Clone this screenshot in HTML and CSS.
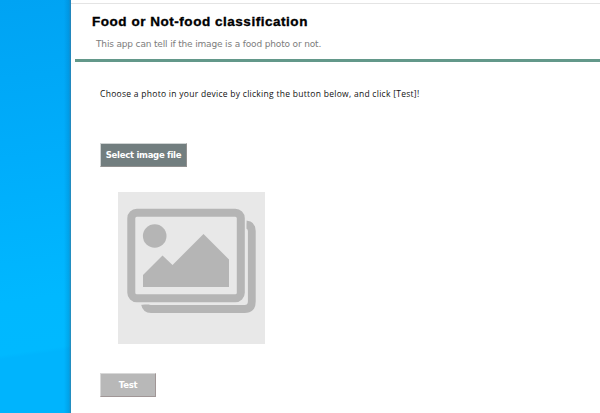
FILE: index.html
```html
<!DOCTYPE html>
<html lang="en">
<head>
<meta charset="utf-8">
<title>Food or Not-food classification</title>
<link rel="stylesheet" href="styles.css">
</head>
<body>
<div class="desktop"></div>
<main class="window">
  <header class="header">
    <h1 class="title">Food or Not-food classification</h1>
    <p class="subtitle">This app can tell if the image is a food photo or not.</p>
  </header>
  <section class="content">
    <p class="hint">Choose a photo in your device by clicking the button below, and click [Test]!</p>
    <button class="button select">Select image file</button>
    <svg class="preview" viewBox="0 0 147 152" role="img" aria-label="No image">
      <rect width="147" height="152" fill="#e8e8e8"/>
      <path d="M128 32.5Q133.800 33 133.800 39V109.500Q133.800 117 126.500 117H33Q28 117 27 112" fill="none" stroke="#b5b5b5" stroke-width="7.800"/>
      <rect x="7.500" y="14.500" width="121" height="98" rx="11" fill="#e8e8e8"/>
      <rect x="13.300" y="20.800" width="109.500" height="85.500" rx="5.500" fill="none" stroke="#b5b5b5" stroke-width="8"/>
      <circle cx="36.700" cy="44" r="11.800" fill="#b5b5b5"/>
      <path d="M25 83 44.500 63.500 54.500 73 85.500 42 111 67.500V95H25Z" fill="#b5b5b5"/>
    </svg>
    <button class="button test">Test</button>
  </section>
</main>
</body>
</html>
```

FILE: styles.css
```css
* { box-sizing: border-box; }
body {
  display: flex;
  height: 413px;
  margin: 0;
  overflow: hidden;
  background: #fff;
}
.desktop {
  width: 71px;
  background:
    linear-gradient(90deg, transparent 64px, rgba(0, 90, 150, .2) 69px, rgba(70, 110, 140, .65) 71px),
    linear-gradient(172deg, #00a3f3 0, #00adfb 38%, #00b8ff 72%, #00b9ff 84%, #00b4fd 85%, #00b4fd 100%);
}
.window {
  flex: 1;
  margin-top: 3px;
  padding-left: 4px;
  border-top: 1px solid #e4e4e4;
}
.header {
  height: 58px;
  padding: 10px 0 0 17px;
  border-bottom: 3px solid #63988a;
}
.title, .subtitle, .hint { margin: 0; white-space: nowrap; }
.title {
  font: bold 13.5px/16px "Liberation Sans", sans-serif;
  letter-spacing: .53px;
  color: #000;
  -webkit-text-stroke: .35px #000;
}
.subtitle {
  margin: 6px 0 0 4px;
  font: 9px/16px "DejaVu Sans", sans-serif;
  letter-spacing: -.16px;
  color: #7c7c7c;
}
.content {
  display: flex;
  flex-direction: column;
  align-items: flex-start;
  padding: 25px 0 0 25px;
}
.hint {
  font: 8.5px/14px "Open Sans", sans-serif;
  letter-spacing: .28px;
  color: #111;
}
.button {
  height: 24px;
  padding: 0;
  border: 1px solid;
  font: bold 8.5px/20px "DejaVu Sans", sans-serif;
  letter-spacing: -.28px;
  color: #fff;
}
.select {
  width: 87px;
  margin-top: 42px;
  border-color: #d0d4d4 #91908f #91908f #d0d4d4;
  background: #727e7f;
}
.preview {
  width: 147px;
  height: 152px;
  margin: 25px 0 0 18px;
}
.test {
  width: 56px;
  margin-top: 29px;
  border-color: #d8d8d8 #a09696 #a09696 #d8d8d8;
  background: #b8b8b8;
}
```
